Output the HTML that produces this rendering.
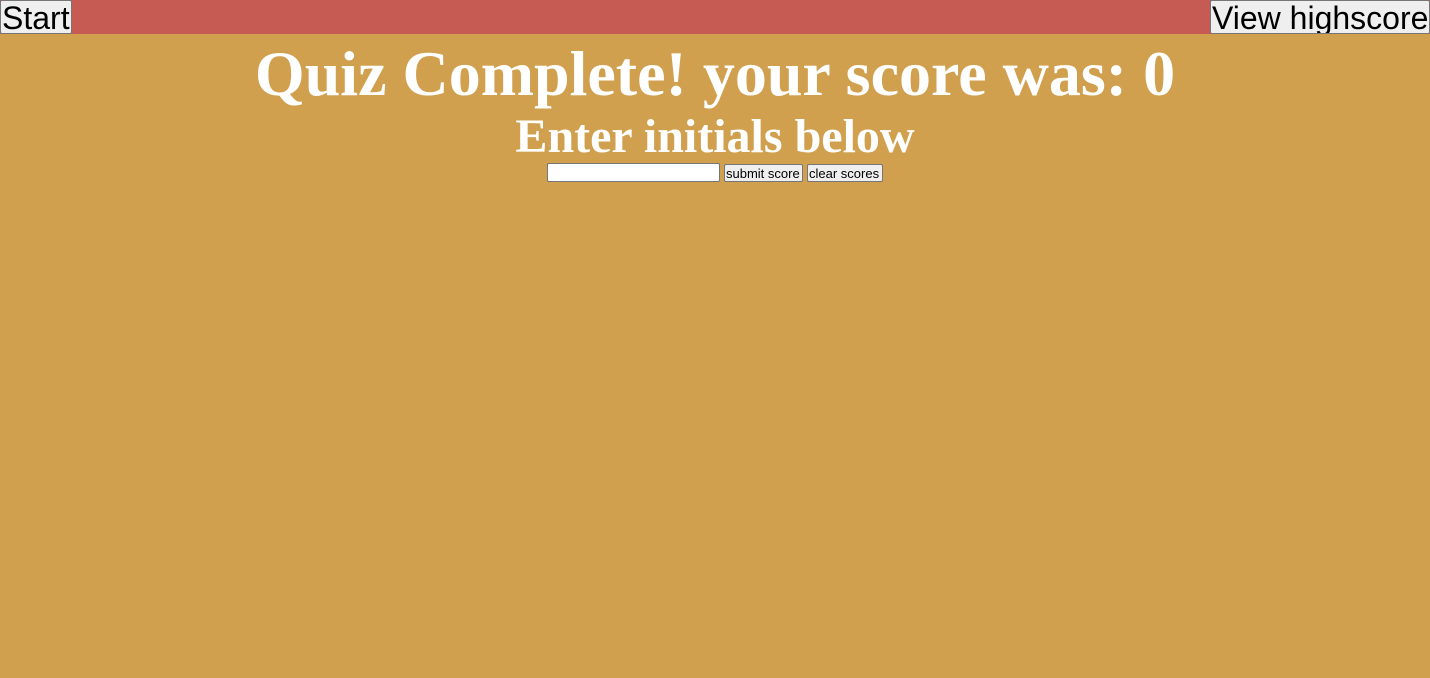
<!DOCTYPE html>
<html><head><style>
html,body{margin:0;padding:0;width:1430px;height:678px;background:#d0a04e;overflow:hidden;font-family:"Liberation Serif",serif}
.bar{position:absolute;left:0;top:0;width:1430px;height:34px;background:#c55b53}
.btn{position:absolute;background:#efefef;border:1px solid #767676;border-radius:2px;font-family:"Liberation Sans",sans-serif;color:#000;box-sizing:border-box;padding:0 1px;white-space:nowrap;line-height:1;overflow:hidden}
h1,h2{position:absolute;left:0;width:1430px;text-align:center;color:#fff;margin:0;font-weight:bold;white-space:nowrap}
h1{top:38px;font-size:64px;line-height:72px}
h2{top:111px;font-size:48px;line-height:52px}
input{position:absolute;left:547px;top:163px;width:173px;height:19px;box-sizing:border-box;border:1px solid #767676;border-radius:2px;background:#fff;margin:0;padding:0}
</style></head><body>
<div class="bar"></div>
<div class="btn" style="left:0;top:0;width:72px;height:34px;font-size:32px;padding-top:1px">Start</div>
<div class="btn" style="left:1210px;top:0;width:220px;height:34px;font-size:32px;padding-top:1px">View highscore</div>
<h1>Quiz Complete! your score was: 0</h1>
<h2>Enter initials below</h2>
<input type="text">
<div class="btn" style="left:724px;top:164px;width:79px;height:18px;font-size:13px;padding-top:2px">submit score</div>
<div class="btn" style="left:807px;top:164px;width:76px;height:18px;font-size:13px;padding-top:2px">clear scores</div>
</body></html>
